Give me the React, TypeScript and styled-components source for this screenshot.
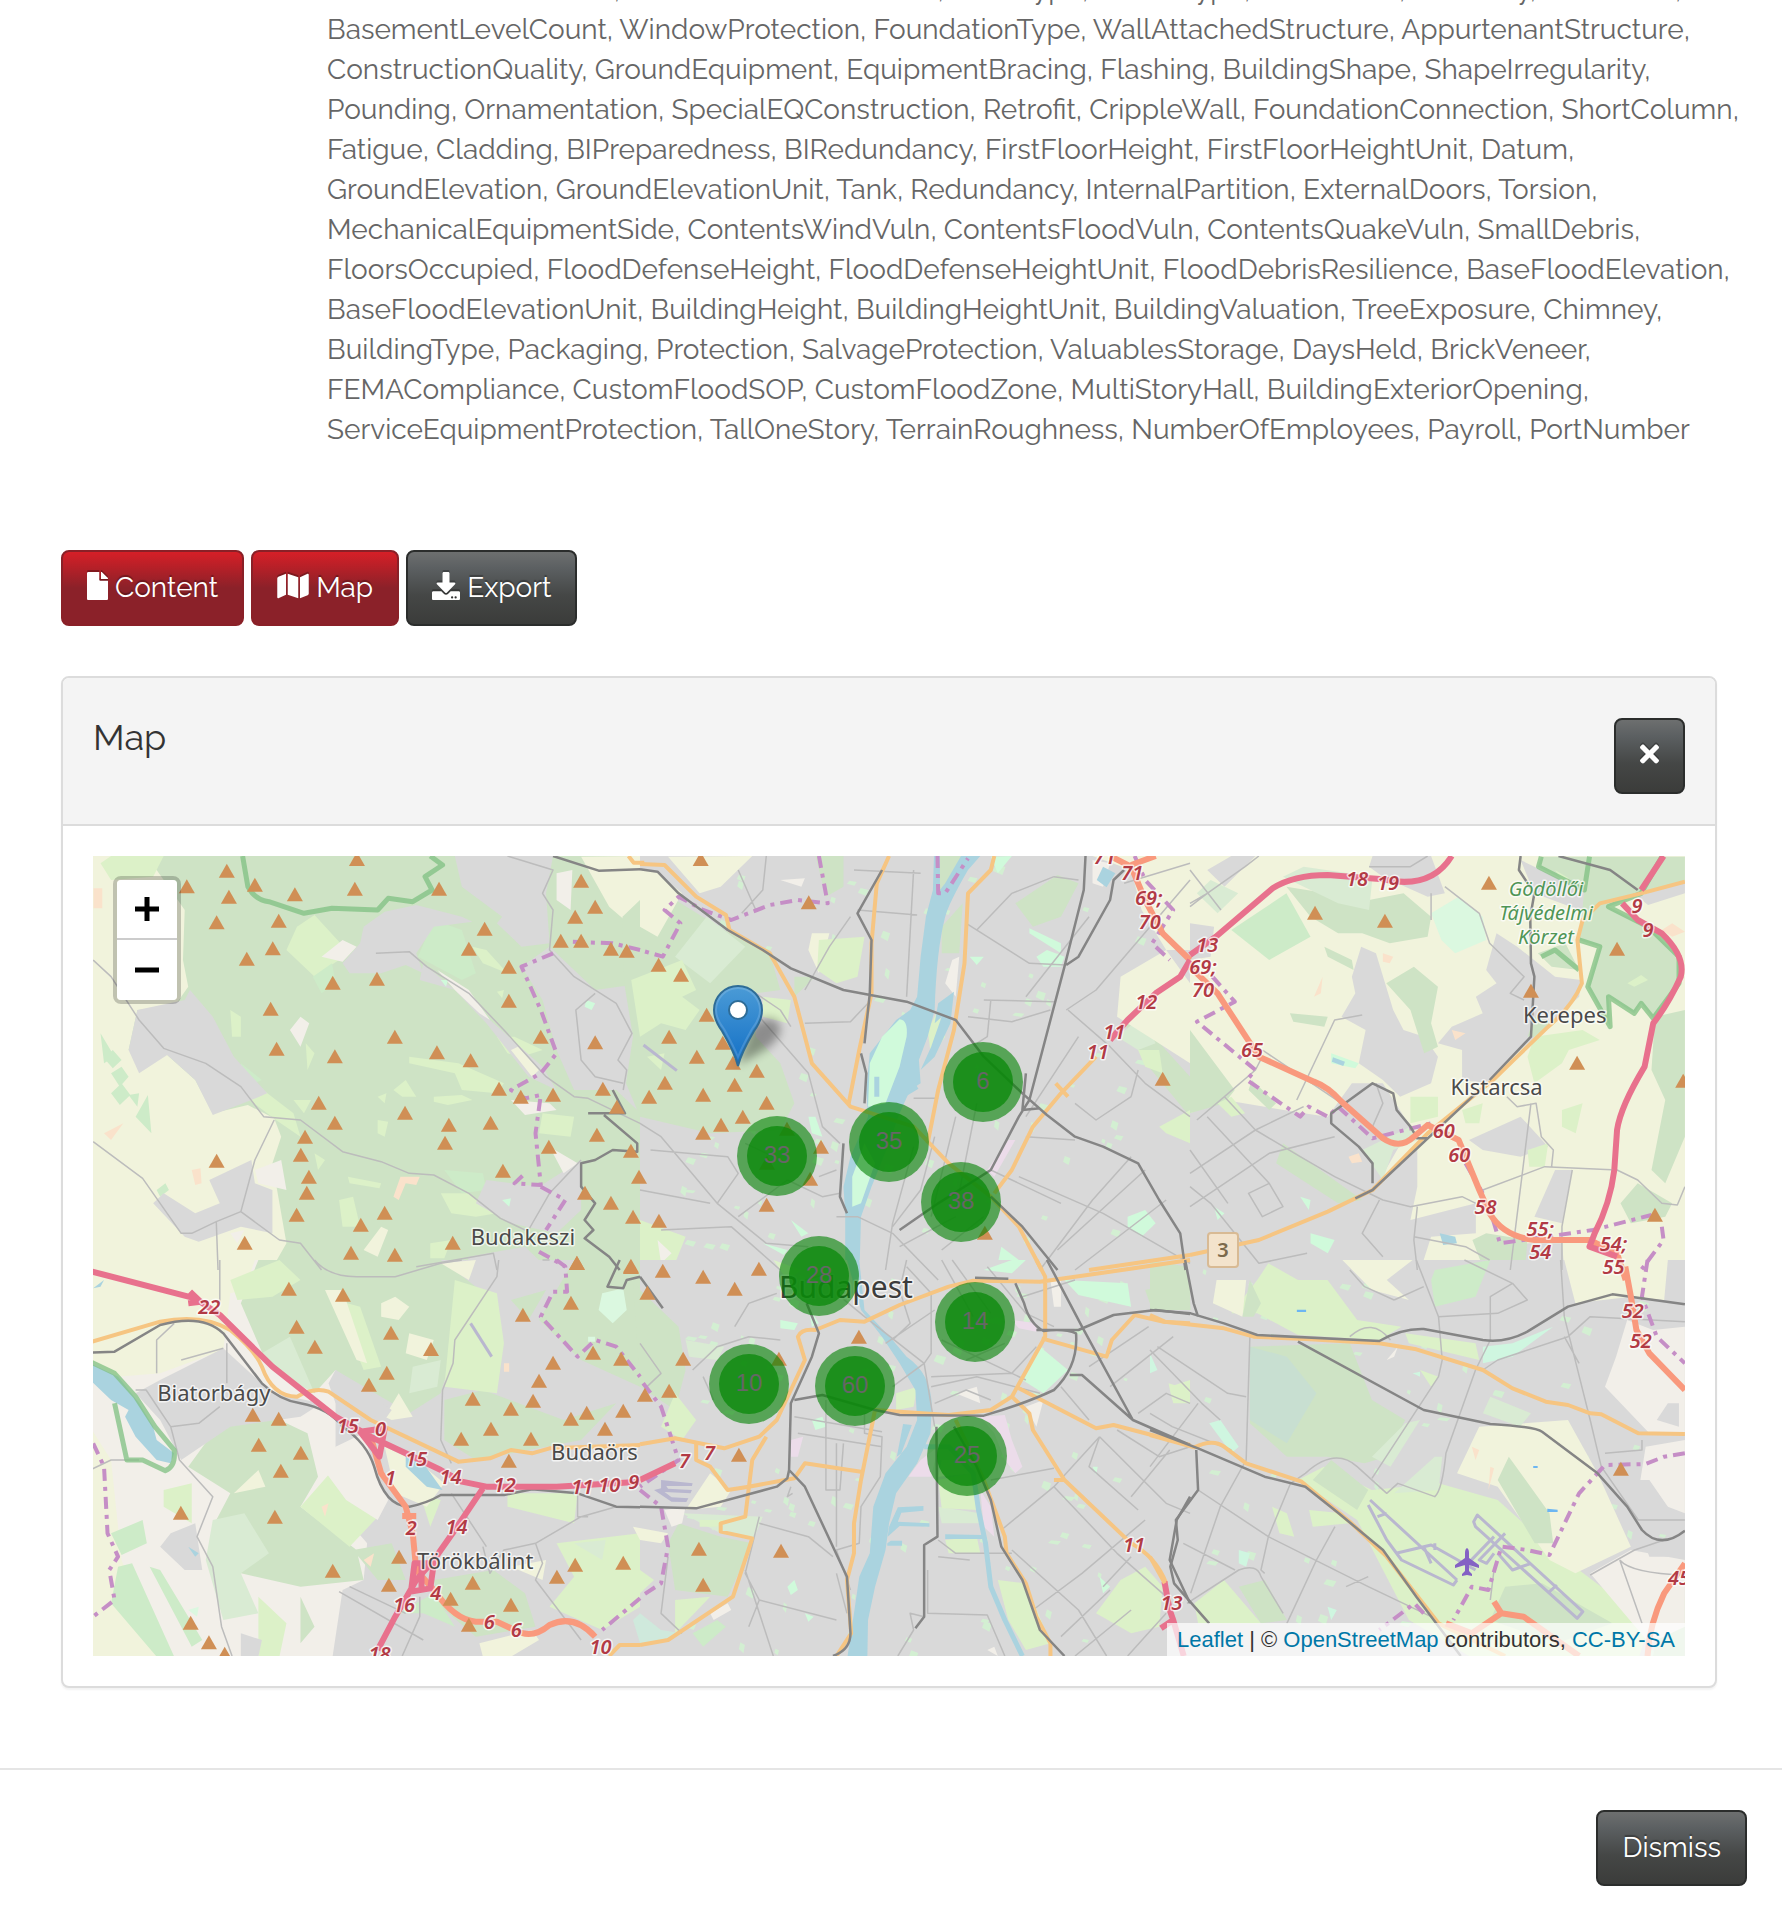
import React from "react";
import styled, { createGlobalStyle, css } from "styled-components";
import { FaDownload, FaFile, FaMap, FaTimes } from "react-icons/fa";

/* ---------- page ---------- */

const GlobalStyle = createGlobalStyle`
  *, *::before, *::after { box-sizing: border-box; }
  body {
    margin: 0;
    background: #fff;
    color: #666;
    font-family: Raleway, Lato, "Open Sans", sans-serif;
    font-size: 28px;
    line-height: 40px;
    overflow: hidden;
  }
`;

const Modal = styled.main`
  display: flex;
  flex-direction: column;
`;

const Details = styled.dl`
  display: grid;
  grid-template-columns: 292px 1fr;
  margin: -30px 0 0;
  padding: 0 32px 0 35px;
`;

const Fields = styled.dd`
  grid-column: 2;
  margin: 0;
  white-space: nowrap;
`;

const Section = styled.section`
  display: flex;
  flex-direction: column;
  gap: 50px;
  padding: 100px 65px 80px 61px;
`;

const Toolbar = styled.div`
  display: flex;
  gap: 7px;
`;

const red = css`
  border-color: #8a2027;
  background: linear-gradient(#d61f27, #8b2129 50%, #8b2129);
`;

const dark = css`
  border-color: #2b2d2c;
  background: linear-gradient(#6d6f6f, #5c6062 22%, #454746 60%, #3b3c3a);
`;

const Button = styled.button<{ $tone?: "red" | "dark"; $icon?: number }>`
  display: inline-flex;
  align-items: center;
  justify-content: center;
  gap: 7px;
  height: 76px;
  padding: 0 24px;
  border: 2px solid;
  border-radius: 8px;
  color: #fff;
  font: inherit;
  text-shadow: 0 -2px 1px rgba(0, 0, 0, 0.3);
  cursor: pointer;
  ${(p) => (p.$tone === "red" ? red : dark)}

  svg {
    flex: none;
    width: ${(p) => p.$icon ?? 28}px;
    height: 28px;
    margin-bottom: 4px;
    filter: drop-shadow(0 -2px 0 rgba(0, 0, 0, 0.25));
  }
`;

const Card = styled.article`
  border: 2px solid #dcdcdc;
  border-radius: 8px;
  background: #fff;
  box-shadow: 0 2px 2px rgba(0, 0, 0, 0.05);
`;

const CardHeader = styled.header`
  display: flex;
  align-items: flex-start;
  justify-content: space-between;
  padding: 40px 30px 30px;
  border-bottom: 2px solid #dcdcdc;
  border-radius: 6px 6px 0 0;
  background: #f4f4f4;
`;

const CardTitle = styled.h3`
  margin: 0;
  color: #333;
  font-size: 36px;
  font-weight: 400;
  line-height: 38px;
`;

const CardBody = styled.div`
  padding: 30px;
`;

const Footer = styled.footer`
  display: flex;
  justify-content: flex-end;
  padding: 40px 35px 32px;
  border-top: 2px solid #e5e5e5;
`;

/* ---------- map widgets ---------- */

const MapFrame = styled.div`
  position: relative;
  height: 800px;
  overflow: hidden;
  background: #d9d9d9;
  font-family: "Liberation Sans", Arial, sans-serif;
`;

const MapCanvas = styled.svg`
  display: block;
  width: 100%;
  height: 100%;

  path { vector-effect: non-scaling-stroke; }
`;

const ZoomControl = styled.div`
  position: absolute;
  top: 20px;
  left: 20px;
  display: flex;
  flex-direction: column;
  border: 4px solid rgba(0, 0, 0, 0.2);
  border-radius: 8px;
  background-clip: padding-box;
`;

const ZoomButton = styled.button`
  display: flex;
  align-items: center;
  justify-content: center;
  width: 60px;
  height: 60px;
  padding: 0;
  border: 0;
  border-radius: 0 0 4px 4px;
  background: #fff;
  color: #000;
  cursor: pointer;

  &:first-child {
    border-bottom: 2px solid #ccc;
    border-radius: 4px 4px 0 0;
  }
`;

const Cluster = styled.button`
  position: absolute;
  display: flex;
  align-items: center;
  justify-content: center;
  width: 80px;
  height: 80px;
  margin: -40px 0 0 -40px;
  padding: 0 0 2px;
  border: 10px solid transparent;
  border-radius: 50%;
  background: rgba(12, 137, 12, 0.78) padding-box;
  color: #666;
  font: 24px/30px "Liberation Sans", Arial, sans-serif;
  cursor: pointer;

  &::before {
    content: "";
    position: absolute;
    inset: -10px;
    z-index: -1;
    border-radius: 50%;
    background: rgba(0, 128, 0, 0.6);
  }
`;

const Markers = styled.div`
  position: absolute;
  inset: 0;
  isolation: isolate;
`;

const Pin = styled.svg`
  position: absolute;
  overflow: visible;
  width: 50px;
  height: 82px;
  margin: -82px 0 0 -25px;
`;

const Attribution = styled.div`
  position: absolute;
  right: 0;
  bottom: 0;
  padding: 0 10px;
  background: rgba(255, 255, 255, 0.7);
  color: #333;
  font-size: 22px;
  line-height: 33px;

  a { color: #0078a8; text-decoration: none; }
`;

/* ---------- map data ---------- */

type Pt = [number, number];
type Label = [string, number, number];

interface Sheet {
  x: number;
  y: number;
  sx: number;
  specks?: number;
  fills: [string, string][];
  minor: string;
  rail: string;
  primary: string;
  trunk?: string;
  motorway?: string;
  border: string;
  peaks: Pt[];
  refs: Label[];
  towns?: Label[];
}

const SY = 1 / 3;
const C = {
  urban: "#d9d9d9",
  farm: "#f1f3dc",
  wood: "#cee3c5",
  grass: "#dcf1c8",
  park: "#cdebc8",
  pale: "#f2efe9",
  pitch: "#d0fadb",
  water: "#aad3df",
  works: "#ecdcea",
  scrub: "#d9ebd3",
  sand: "#fae2cb",
};

const sheets: Sheet[] = [
  {
    x: 90, y: 850, sx: 0.3508,
    fills: [
      [C.wood, "M0 0H1580V1290H0Z"],
      [C.farm, "M0 0L100 18L190 60L270 180L265 330L280 410L240 470L135 480L110 600L220 615L300 690L350 790L450 765L525 805L545 860L520 940L560 1180L500 1290H0Z"],
      [C.grass, "M30 40L60 18H210L180 80L60 90Z M590 230L640 195L740 310L680 350L660 400L560 300Z M455 750L500 725L580 790L600 860L530 810Z M1160 560L1210 560L1290 600L1230 620L1190 610Z M910 620L1050 640L1180 700L1160 730L1060 720L1040 670L910 640Z M980 740L1060 735L1090 750L1020 765L980 755Z M1290 790L1380 800L1370 860L1280 850Z M1000 1030L1080 1030L1160 1090L1100 1100L1030 1090Z M710 1050L750 1040L770 1130L720 1130Z M970 1180L1030 1170L1010 1225L970 1225Z M400 480L430 500L430 560L405 560Z M615 580L640 610L620 660Z M640 910L670 930L650 960Z M735 980L830 1000L825 1015L740 1000Z M820 740L845 730L840 760Z M820 810L850 815L840 860L820 850Z M865 720L900 690L930 740L890 740Z M580 750L630 750L610 790Z M1160 425L1180 420L1175 445Z M1090 290L1130 300L1190 370L1120 340Z"],
      [C.park, "M935 320L980 210L1060 240L1100 370L1060 390Z M635 380L690 340L700 400L660 430Z M30 550L70 620L40 640Z M40 625L65 600L90 630L65 655Z M60 670L90 650L110 680L85 710Z M60 730L90 700L115 735L85 765Z M110 735L140 730L135 770Z M130 800L165 735L175 850Z M430 640L490 690L470 700L430 670Z M1010 960L1120 970L1130 1020L1060 1030Z M190 1020L215 1000L225 1020L200 1040Z"],
      [C.urban, "M285 420L350 500L410 620L505 730L460 750L350 795L300 690L220 615L140 670L110 600L135 480L270 450Z M1040 18H1320L1300 130L1310 280L1230 290L1160 220L1175 200L1060 110Z M780 230L840 185L930 165L1060 200L1090 215L980 230L930 310L950 370L900 345L830 370L740 370L720 340L770 280Z M1230 350L1310 290L1440 420L1580 400V800L1500 720H1380L1330 600L1290 450Z M950 340L1130 500L1290 650L1330 720L1250 680L1130 520L1040 420L940 390Z M460 930L340 990L370 1060L300 1090L210 1030L180 1060L270 1160L310 1175L430 1130L520 1150L520 1020L470 1000Z M1130 990L1280 1010L1400 930L1400 1080L1330 1150L1200 1120L1100 1060Z M1080 1220L1240 1190L1340 1290H1060Z"],
      [C.pale, "M660 320L720 270L760 290L720 335Z M570 540L600 500L625 520L600 590Z M1330 70L1375 60L1370 180L1330 150Z M470 960L545 930L560 1020L480 1000Z M1200 750L1310 760L1330 780L1240 795Z M1310 890L1390 940L1350 970Z M990 360L1080 420L1140 510L1110 490L1040 420Z M400 1150L440 1140L420 1180Z"],
      [C.farm, "M1400 20L1568 18V250L1480 170Z M1200 600L1220 590L1280 660L1260 680Z M780 1200L830 1130L850 1140L820 1220Z"],
      [C.sand, "M865 1040L885 980L940 980L930 1005L900 1000L880 1050Z M290 960L315 955L318 1000L300 1005Z M10 115H35V175H10Z M40 850L95 820L60 870Z"],
      [C.pitch, "M1415 450L1440 460L1430 480L1410 470Z M1000 390L1020 390L1015 410Z M1175 1050L1200 1045L1195 1070Z"],
    ],
    minor: "M9 330L60 380L140 510L210 595L330 640L430 710L495 800L600 810L720 905L830 935L910 970L980 975L1080 1030L1170 1105L1240 1140 M9 875L150 985L260 1150L290 1150L360 1115L430 1085L540 1170L600 1180L660 1260 M525 810L470 930L430 1085 M360 1115L365 1260 M815 310L910 305L960 350L1080 430L1180 540L1300 680L1380 740L1420 745L1568 820 M1190 18L1320 60L1290 130L1320 180L1310 300L1380 380L1500 460L1545 550L1505 630L1530 660L1520 720 M1400 930L1310 1030L1250 1140 M930 1250L1150 1210L1160 1260 M1440 430L1385 480L1400 630L1440 680L1520 700",
    rail: "M1320 18L1450 62L1568 58 M1490 720L1525 790L1420 790 M1465 795L1560 880L1560 905L1490 900L1440 930L1400 940L1400 1010L1440 1060L1410 1110L1435 1140L1410 1165L1480 1220L1510 1260",
    primary: "M1535 18L1550 38L1580 38",
    border: "M1568 300L1490 280L1370 275 M1320 310L1230 350L1285 480L1330 610L1285 670L1200 720L1240 745L1285 735L1270 850L1285 1005L1210 1000L1240 970 M1285 1010L1355 1050L1300 1140 M1280 1205L1355 1250",
    peaks: [[390,65],[276,112],[396,143],[470,107],[761,30],[584,136],[755,119],[995,119],[361,220],[538,215],[521,298],[447,329],[692,401],[818,389],[515,479],[1125,239],[1080,299],[1194,353],[1194,455],[1400,95],[1440,173],[1383,203],[1342,275],[1400,275],[1485,299],[1530,305],[869,563],[532,599],[698,622],[989,610],[1085,634],[1285,563],[1440,580],[1166,719],[1228,743],[1320,737],[1462,719],[1502,773],[652,761],[698,821],[898,791],[1023,827],[1142,821],[1012,881],[613,863],[601,917],[624,983],[618,1031],[361,935],[589,1097],[840,1091],[772,1127],[744,1211],[869,1217],[1034,1181],[441,1181],[1308,893],[1177,965],[1445,857],[1542,905],[1411,1031],[1485,1061],[1548,1103],[1388,1241],[1542,1250],[1565,983]],
    refs: [],
    towns: [["Budakeszi", 1234, 1165]],
  },
  {
    x: 640, y: 850, sx: 0.3508, specks: 90,
    fills: [
      [C.urban, "M0 0H1590V1290H0Z"],
      [C.wood, "M-50 200L0 150L70 130L240 240L370 310L400 420L330 430L330 560L400 640L440 760L400 840L200 850L0 800L-40 700L-20 560L-45 400Z M440 380H500L440 440Z M1190 75L1250 100L1200 200L1120 230L1070 160Z M860 230L920 160L910 310L860 310Z M1380 520L1430 520L1568 680V800L1450 650Z M500 18H580V110L530 140Z"],
      [C.scrub, "M100 320L190 200L300 290L200 400Z M1360 560L1430 500L1470 580L1420 600Z"],
      [C.farm, "M0 60H40L120 130L50 260L0 230Z M80 20L320 18L230 110L170 130Z M1290 18H1568V300L1500 300L1430 180L1400 60Z M1370 380L1500 300L1568 400V640L1450 560L1360 500Z M490 250L540 250L510 370L480 300Z"],
      [C.grass, "M-25 390L120 330L160 420L120 440L170 480L130 540L60 520L0 560Z M510 270L640 260L620 380L560 400L505 360Z M350 440L430 450L420 520L350 500Z M1480 830L1568 780V880L1500 850Z M0 1110L130 1160L100 1240L30 1290H0Z M1420 600L1480 600L1490 670L1440 650Z M820 540L850 480L870 560L830 620Z M20 620L70 610L60 660Z"],
      [C.pitch, "M1130 320L1160 300L1210 320L1200 350L1150 350Z M1110 235L1200 280L1200 310L1110 250Z M940 320L980 320L960 345Z M480 800L500 800L520 860L490 850Z M1390 1100L1440 1080L1470 1120L1430 1160L1390 1130Z M1030 1190L1080 1230L1020 1240Z M430 1110L480 1150L460 1160Z M1000 20L1060 18L1020 70Z M350 1180L420 1200L410 1215Z"],
      [C.works, "M1050 870L1070 870L1010 980L990 960Z"],
      [C.pale, "M50 1170L90 1210L60 1240Z M400 90L470 85L460 110Z M890 330L910 320L900 440L870 400Z M1290 30L1340 40L1320 110L1290 100Z"],
      [C.water, "M838 18H970L935 60Q880 160 870 200Q845 300 840 480L820 560L795 630L800 700L770 720L740 790L710 880L660 1010L630 1100L625 1290H585V1090L580 1010L600 920L650 800L645 720L655 610L730 510L770 480L790 440L800 320L815 200L835 120Z M895 425L885 520L840 620L800 660L830 590L860 500L840 520L850 460Z M1320 50L1355 70L1330 112L1302 90Z"],
      [C.pitch, "M740 508Q765 510 760 560L740 650L700 760L650 770L655 640L690 560Z M640 880L670 940L630 1060L605 1070V980Z"],
      [C.wood, "M855 18H915L870 100L855 120Z"],
    ],
    minor: "M360 18L350 120L290 190 M280 60L330 180 M470 420L540 290L600 200 M610 60L800 70 M620 180L790 195 M780 60L760 440 M470 520L600 515L650 460 M330 430L400 480L430 530 M340 500L480 670L520 830L570 880 M930 220L1110 340L1215 345 M980 450L1180 455 M935 500L1060 515L1170 480 M1000 450L990 560L960 580 M1180 80L1060 130L960 240 M1180 80L1250 90 M1380 100L1568 40 M1220 480L1340 590L1440 700L1568 800 M1100 440L1280 200 M1215 480L1300 420L1568 90 M1400 740L1420 660 M1240 760L1300 810L1400 740 M1100 860L1240 870 M1080 980L1320 1090L1568 1240 M1000 960L1200 1060 M1140 1260L1290 1050L1400 920 M1190 1200L1440 960 M1240 1260L1500 1050 M860 1200L980 1100 M700 1260L720 1120L780 890 M840 860L800 1020L720 1130 M560 1100L620 1100L720 1150L850 1290 M740 1190L900 1100 M900 800L830 1100 M0 820L60 860L220 1060 M30 900L250 920L280 970L220 1060L360 1180L480 1190 M0 1020L200 1060 M60 1140L260 1130L400 1260 M280 1100L420 990 M420 990L520 1040L570 1030 M300 880L380 920 M510 980L560 960 M780 745L850 745 M960 760L900 1080 M1250 560L1100 800",
    rail: "M0 58L50 65L110 130L250 240L350 300L430 355L580 420L760 455L900 510L980 620L1090 730L1160 795L1240 860L1320 890L1420 940L1480 1050L1540 1150L1555 1260 M1270 18L1265 120L1210 350L1110 750L1080 800L1000 960L850 1060L740 1140 M1380 60L1350 90L1340 150L1250 320L1215 345 M690 60L620 190L660 270L655 430L640 580 M630 610L645 670L640 760 M580 880L570 1040L590 1090 M1000 1040L1090 1130L1190 1260 M1100 670L1090 780L1140 775",
    primary: "M0 42L70 45L160 140L245 195L255 240L370 310L440 440L490 640L600 770L780 830L880 940L1000 1040L1080 1130L1145 1260 M710 18L675 100L660 280L660 430L625 600L595 760 M1010 18L1000 60L935 130L925 340L895 540L850 720L820 880 M1300 620L1200 730L1120 830L1060 960L1010 1030 M1185 700L1220 740 M1568 1215L1280 1260",
    trunk: "M1340 18L1400 50L1440 150L1490 250L1568 330 M1400 45L1470 18",
    motorway: "M1568 330L1540 380L1470 430L1390 510L1340 570",
    border: "M510 18L535 160L450 150L370 165L260 210L180 180L110 140L70 180L115 220L65 320L0 300 M848 18L850 130L870 130L935 25 M1410 18L1440 90L1520 180L1460 280L1510 330",
    peaks: [[173,30],[481,160],[53,347],[117,377],[190,497],[83,563],[236,581],[162,623],[265,641],[333,665],[71,701],[26,743],[180,737],[270,707],[361,761],[293,803],[231,827],[180,851],[419,839],[516,893],[362,941],[485,989],[361,1067],[54,1115],[1490,689],[983,1151]],
    refs: [["71",1325,22],["71",1403,70],["69;",1450,143],["70",1453,215],["12",1443,455],["11",1352,545],["11",1305,607]],
  },
  {
    x: 1190, y: 850, sx: 0.3444,
    fills: [
      [C.farm, "M0 0H1460V1290H0Z"],
      [C.urban, "M50 60L120 18L190 18L100 110Z M0 220L70 230L60 320L0 330Z M530 18H700L740 130L690 140L560 80L520 50Z M497 290L540 310L590 480L620 540L680 560L720 620L700 700L610 740L560 690L490 640L510 540L440 500L480 430L470 380Z M890 250L950 290L1060 380L1135 390L1130 440L960 600L860 700L790 690L790 600L720 580L760 530L850 490L830 440L890 400L860 360Z M0 790L100 750L330 790L400 800L470 700L560 700L640 830L540 1010L660 900V1010L640 1110L830 1060V1150L700 1160L660 1290H0Z M810 870L960 800L1040 890L960 920L850 900Z M1300 140L1437 90V130L1330 165Z M1060 960H1110L1080 1120L1000 1100Z M960 30L1080 90L1150 110L1200 160L1130 180L1000 130Z M1390 1240H1437V1290H1390Z M980 1180L1080 1180L1090 1290H900Z"],
      [C.wood, "M280 110L520 150L620 130L700 200L690 260L580 280L500 250L430 250L350 200Z M570 400L650 350L720 410L700 520L720 590L680 610L640 480Z M1350 500L1437 480V860L1380 1000L1340 960L1380 750L1340 660Z M1250 1060L1300 1000L1400 1060L1380 1100L1280 1120Z M0 540L130 720L100 760L0 790Z M270 880L500 1050L430 1060L250 940Z M820 1170L860 1150L980 1170L970 1290H700L850 1250Z M390 290L470 330L475 360L400 320Z M290 490L400 500L390 530L300 515Z M980 560L1000 500L1060 520L1010 560Z M180 690L250 760L230 780L170 720Z M1010 310L1090 280L1130 360L1050 350Z"],
      [C.scrub, "M330 50L530 80L520 180L430 160L270 80Z M20 130L60 90L140 130L80 190Z M500 900L560 990L590 900L660 870L640 830Z"],
      [C.park, "M280 130L350 260L230 330L120 240Z"],
      [C.grass, "M1000 560L1140 540L1190 570L1100 600L1080 640L1000 700L980 620Z M640 740L720 740L720 800L640 820Z M790 780L850 760L840 820L800 820Z M980 900L1040 880L1030 950L985 950Z M1080 780L1140 760L1120 850L1080 830Z M80 760L120 740L160 790L120 800Z"],
      ["#dbf8e0", "M700 190L780 140L850 200L860 270L770 310L730 270Z"],
      [C.pitch, "M350 1150L420 1170L400 1210L350 1180Z M320 1040L350 1050L345 1080Z M70 1070L100 1090L80 1110Z M410 610L490 640L480 655L410 640Z"],
      [C.water, "M415 622L450 635L445 648L412 635Z M725 1150L770 1160L775 1180L735 1185Z"],
      [C.sand, "M560 310L590 320L580 340L560 335Z M760 540L800 550L770 570Z M360 440L385 380L380 430Z M1370 240L1400 220L1437 245L1400 260Z M460 920L490 910L500 935L470 940Z"],
      [C.wood, "M1020 20H1437V95L1310 130L1215 170L1330 230L1420 320V400L1345 505L1310 460L1290 490L1215 440L1220 530L1155 410L1190 290L1130 270L1145 120L1010 50Z"],
      [C.grass, "M1270 400L1310 375L1330 390L1290 410Z M1060 60L1080 90L1100 85Z"],
    ],
    minor: "M0 170L50 130L160 50L200 18 M0 60L90 180 M50 130L0 160 M520 50L640 50L690 18 M700 130V210 M740 110L840 190L870 280L970 380L930 430L970 450 M310 750L420 510L500 495 M210 620L190 660L100 740L20 810 M100 740L190 840L320 920L420 980L560 1050L640 1070L790 1040L830 1060 M850 1020L1030 950L1240 960L1300 990L1370 1060L1415 1065L1437 1010 M1110 960L1080 1130V1260 M920 740L950 770L1005 760L1020 860L1055 900L1050 950 M660 1070L650 1170L660 1260 M0 970L190 840 M0 1070L230 910L420 860 M190 840L330 770 M50 800L230 1000L270 1070L210 1100L170 1030L230 1000 M0 1010L60 1060L200 1240L340 1210 M550 1050L500 1150L560 1220 M440 760L210 600 M0 900L110 1060 M650 1160L800 1190L870 1230 M540 700L560 760L530 830 M990 760L930 1260",
    rail: "M960 18L955 60L1000 130L988 200L990 340L1000 380L990 560L870 690 M1070 18L1220 60L1300 120 M830 730L530 1020L480 1045 M530 1000L530 940L490 890L410 820V790L530 700L590 730L600 780L640 830L660 865H690",
    primary: "M1437 95L1310 130L1190 160L1140 210L1125 270L1138 400Q1110 470 1040 530L950 620L880 690L690 850L530 1020L400 1085L200 1170L0 1215",
    trunk: "M0 350L20 370L80 430L200 620L360 695Q400 710 440 755L560 865Q610 900 650 860L690 825L780 870L840 1020L870 1090Q910 1160 1000 1170H1160L1240 1210L1265 1290",
    motorway: "M0 315L75 260L240 115Q300 75 400 75L560 88Q700 120 760 18 M1375 18L1310 120 M1255 160L1300 210L1370 250Q1440 320 1425 380Q1390 460 1345 520L1320 650Q1250 770 1240 840L1232 960Q1220 1060 1175 1150L1160 1190L1240 1220",
    border: "M65 380L130 455L20 515L190 660L165 690L320 800L345 770L400 800L430 770L530 865L700 820 M800 940L850 1030 M880 1110L900 1180L1170 1140L1340 1095 M1370 1130L1375 1170L1310 1260",
    peaks: [[363,191],[566,215],[868,101],[1240,299],[990,425],[1124,641],[1350,1097],[1432,695]],
    refs: [["18",485,88],["19",575,98],["9",1298,168],["9",1330,240],["13",50,285],["69;",38,350],["70",38,419],["65",180,600],["60",737,842],["60",782,915],["58",858,1072],["55;",1017,1137],["54",1017,1207],["54;",1230,1182],["55",1230,1252]],
    towns: [["Kerepes", 1088, 497], ["Kistarcsa", 890, 714]],
  },
  {
    x: 90, y: 1260, sx: 0.3508,
    fills: [
      [C.pale, "M0 0H900V1200H0Z"],
      [C.urban, "M700 0H1580V1200H690L720 990L780 960L790 850L700 740Z"],
      [C.farm, "M0 0H470L440 90L400 100L380 270L200 340L80 350L0 300Z M0 500L60 600L90 900L200 1200H0Z"],
      [C.wood, "M480 0H1000L1100 80L1040 250L1000 400L910 460L700 330L640 400L500 300L430 130Z M370 490L500 460L620 520L650 650L600 740L760 870L780 960L600 980L430 940L350 800L400 700L280 620Z M1280 180L1380 0H1568V380L1400 300Z M980 960L1150 930L1240 1000L1270 1100L1100 1130L1000 1040Z M1010 420L1120 390L1350 480L1500 430L1400 540L1100 600L1010 540Z M600 1010L640 1100L600 1150Z M750 870L860 850L900 960L820 960Z M1200 120L1300 90L1250 180Z"],
      [C.grass, "M400 60L540 0L600 60L520 110L420 120Z M600 740L700 620L830 760L740 860Z M1190 700H1390L1380 790L1190 740Z M1330 850L1568 820V1040L1460 1110L1310 1040L1380 950Z M1040 60L1160 100L1180 250L1160 400L1010 380Z M210 690L290 670V790L210 740Z M940 700L1000 720L970 800Z M480 1010L560 1090L540 1190H480Z M700 120L770 140L830 320L780 330Z"],
      [C.scrub, "M490 280L570 230L640 400L520 330Z M350 780L440 760L510 880L430 940L480 1060L380 1080L330 900Z M920 320L1000 300L990 380L910 400Z M1380 850L1470 840L1460 900Z"],
      [C.park, "M60 820L150 780L162 850L90 885Z M80 920L120 910L240 1190H190L60 1030Z M170 920L200 930L320 1140L290 1160Z M880 1060L980 1000L1040 1100L950 1060Z"],
      [C.farm, "M1000 10L1100 0L1080 60Z M830 130L870 110L910 140L880 180L830 170Z M670 90L720 90L790 310L760 300Z M840 470L880 400L920 470L860 480Z M840 560L940 610L1010 670L960 740L870 700Z M1200 920L1300 900L1290 960Z M1110 1150L1260 1110L1280 1140L1200 1190H1120Z M910 220L980 240L960 300L900 280Z M480 630L500 680L410 700Z"],
      [C.urban, "M200 360L380 265L520 400L660 430L600 470L400 500L260 600L200 480L130 400Z M680 370L700 330L860 450L840 480L700 430Z M200 860L230 820L300 790L320 930L270 930Z M430 1120L490 1140L480 1190H430Z"],
      [C.pale, "M700 560L780 520L810 620L850 720L820 780L730 720L660 620Z"],
      [C.sand, "M660 740L680 730L670 770Z M1180 310L1195 310L1195 335H1180Z M780 900L810 880L800 920Z"],
      ["#dbf8e0", "M1460 100L1520 85L1530 150L1490 190L1450 150Z M1420 230H1440V245H1420Z M280 1050L310 1040L305 1070Z"],
      [C.water, "M0 310L80 350L140 430L180 500L190 540L240 580L230 610L190 600L130 530L100 470L110 450L60 420L0 360Z M900 590L950 610L1005 690L960 680L900 620Z M280 860L310 880L300 890Z M9 85L40 60L30 80Z"],
    ],
    minor: "M370 0V130 M640 0Q680 50 760 50H870L1000 10L1060 0 M1165 0L1160 50L1040 240L1035 310L1005 390L1000 540L1030 610 M130 390H160L230 500L255 600L350 710L305 830L350 920L375 1100L405 1188 M230 500L310 490L370 440 M0 630L60 600L140 600 M1270 850L1400 770L1500 740 M1270 850L1290 910L1270 960L1400 1140 M710 995L950 1140 M740 980L900 1060 M1290 0L1310 0 M390 250V370 M260 300L380 265 M190 340V240L240 190 M1120 860L1140 940L1180 870L1270 850 M940 1010V1070L890 1188 M1390 700V770H1420 M1030 700L1130 860",
    rail: "M0 278L70 275L200 195Q320 160 380 220L490 370Q540 420 600 430Q680 445 720 500Q790 550 810 620Q840 740 910 740Q960 730 1000 705H1180L1260 688L1390 700L1500 740L1568 742 M1510 0L1475 80L1520 85L1530 60L1568 50",
    primary: "M0 247L200 185Q320 160 400 210Q470 270 490 320Q520 410 590 410Q640 380 680 395L800 480L880 520L1050 605L1140 595L1200 570L1260 580L1310 565L1568 555 M1480 1188L1510 1155H1568",
    trunk: "M800 530L830 640L900 740L920 820L930 930L980 990Q1040 1080 1100 1085H1160L1210 1110Q1260 1140 1310 1095Q1380 1060 1440 1130 M890 768L930 768",
    motorway: "M0 33L300 115L370 165L520 320L700 470L800 530L900 580L1000 630L1060 665L1130 680H1330L1568 665 M285 95L315 125L280 130 M1120 685L1040 810L980 900L930 960L870 1070L820 1170 M770 515L840 505L825 590ZL815 540 M925 910L980 910L970 985L915 995Z M945 910V990",
    border: "M9 550L40 620L50 820L80 890L55 930L70 1020L9 1070 M1330 0L1355 20L1360 95L1320 95L1285 170L1390 290L1440 240L1500 260L1568 350 M1568 1015L1460 1110",
    peaks: [[567,89],[721,107],[589,203],[641,263],[858,221],[972,270],[846,341],[795,377],[1234,167],[1371,131],[1388,12],[1542,24],[1434,281],[1514,299],[1320,311],[1280,365],[1263,425],[1200,449],[1091,419],[1143,509],[1058,539],[1257,539],[1371,479],[1416,461],[1520,455],[1468,509],[464,467],[538,479],[481,557],[601,581],[544,635],[259,761],[527,773],[1194,605],[881,893],[692,935],[852,977],[1091,971],[1028,1019],[1080,1097],[1200,1037],[1331,953],[1383,917],[1520,911],[287,1091],[339,1150],[384,1184]],
    refs: [["22",340,142],["15",735,497],["0",828,508],["15",930,598],["14",1028,650],["1",857,653],["12",1182,675],["11",1403,680],["10",1480,675],["9",1550,665],["14",1045,800],["2",916,803],["16",895,1035],["4",986,1000],["6",1138,1087],["6",1215,1110],["10",1455,1162],["18",825,1182]],
    towns: [["Biatorbágy", 353, 402], ["Budaörs", 1438, 580], ["Törökbálint", 1098, 905]],
  },
  {
    x: 640, y: 1260, sx: 0.3508, specks: 110,
    fills: [
      [C.urban, "M0 0H1580V1200H0Z"],
      [C.wood, "M-20 60L0 90L60 150L110 200L130 330L100 450L0 380Z M110 790L230 830L320 850L250 1010L100 990L80 850Z M1440 90L1568 60V150L1460 150Z"],
      [C.scrub, "M130 240L240 260L220 300L140 290Z M120 760L350 770L300 900L320 840L230 820Z M850 740L970 760V790L860 790Z"],
      [C.farm, "M130 750L200 640L260 690L230 740Z M860 600L940 600L950 640L850 650Z M-20 800L80 820L60 850L0 840Z"],
      [C.grass, "M100 400L160 480L120 540L60 500Z M850 660L940 640L960 700L965 750L860 745Z M1370 960L1440 920L1490 980L1480 1100L1400 1120L1300 1060Z M1020 960L1100 970L1170 1150L1100 1170L1050 1080Z M1510 380L1568 360V430L1520 430Z M380 0L460 30L420 60Z M0 930L40 960L0 1000Z M170 780H240L220 800H170Z M730 400L790 380L780 440L730 450Z M100 1020L200 1010L100 1120Z M870 840L960 830L970 880H880Z"],
      [C.pitch, "M1140 260L1220 330L1150 400L1090 360Z M1210 60L1390 70L1400 140L1250 105Z M490 480L520 470L530 500L500 510Z M420 980L440 960L450 990L430 1005Z M480 140L510 190L490 200Z M1310 950L1340 980L1320 1000Z M980 30L1060 0H1100L1060 40Z M400 180L450 190L440 210L400 205Z M470 1060L495 1070L480 1085Z M1290 620L1305 620L1300 645Z"],
      [C.park, "M150 1120L220 1080L245 1100L180 1160Z"],
      ["#cfe9dc", "M-20 1080L0 1060L60 1110L120 1120L60 1150L0 1150Z"],
      [C.works, "M970 470L1040 465L1060 540L1090 620L1070 640L1040 600L1010 520Z M800 600L850 560L830 650H765Z M430 540L465 530L450 590H430Z M970 690L1000 740L1010 830L980 800Z M1060 180L1130 190L1130 215L1080 205Z"],
      [C.pale, "M70 750L130 740L120 790L90 800Z M200 1060L250 1030L260 1050L210 1080Z M900 400L960 380L970 430Z M1100 440L1150 420L1130 500Z M1170 60L1200 60V140H1180Z M990 1170L1010 1160L1020 1188Z"],
      [C.water, "M590 0H625L640 150L720 240L760 290Q830 340 832 440L828 520L790 610L730 700L710 790L700 870L670 980L650 1080L648 1200H590L610 1060L625 950L655 880L665 740L700 640L760 560L790 480L785 390L740 310L690 230L630 150Z M750 492L775 495L745 580L732 590Z M735 742L808 738V752L745 758L735 785L825 790V800L740 798L706 830L710 800Z M705 850L715 842H747V857H705Z M870 823L975 825V837H870Z"],
      ["#b9b7cf", "M60 660L150 670L148 678H75L80 686L148 690L144 700L70 696L90 712L138 715L132 726L90 725L40 690L60 685Z"],
    ],
    minor: "M0 250L60 340L20 380 M150 330L220 260L310 230L400 240 M180 350L210 420 M440 470L690 515 M450 520L690 560 M530 420L530 690H570L580 550 M640 460V520L690 530L685 650L630 740L625 850L560 870L600 990 M560 550L560 860 M470 60L540 40 M270 200L310 130L390 100 M760 0L740 90L770 190L720 240 M560 100L640 170L810 310L840 500 M700 250L840 150 M720 380L810 310L830 280V100L760 20 M830 350L1060 340L1130 260 M830 380L960 350L1140 400 M860 240L1100 360 M840 430L930 390L1000 420 M860 0L950 170 M890 0L1000 160 M990 20L1100 160L1180 200 M1090 110L1240 60 M930 300L1040 250 M340 790L480 830L550 890 M340 770L300 940L340 1020L560 1080 M80 890L60 1060L120 1120 M300 930L380 1188 M340 1020L310 1100 M560 940L590 1060 M850 840L900 880L1060 880 M850 890L940 900 M735 1188L780 1110L770 1060L810 1070 M820 930V1060L990 1065L1040 1188 M1030 810L1180 680L1310 530 M1000 660L1180 625 M1180 680L1360 880L1500 1010 M1060 870L1250 1050L1330 1188 M1120 1050L1260 940L1440 780 M1200 1130L1340 990 M1310 530L1500 730L1568 760 M1360 510L1480 590L1568 560 M1310 530L1280 620L1420 750 M1400 710L1510 570 M1280 320L1450 200 M1340 380L1520 230 M1420 460L1500 400L1568 430 M1390 1188L1500 1060 M1240 1188L1400 1050 M1400 890L1320 980 M430 680L420 710L435 700 M1200 380L1280 480",
    rail: "M475 130L510 220L490 290L430 430L425 630L470 680L590 950L600 1120Q600 1170 550 1188 M440 420L520 405L670 450L740 465L980 467Q1100 430 1180 390Q1250 320 1243 220Q1210 205 1150 213Q1110 190 1095 130L1070 70 M1160 0L1260 200L1405 480 M1225 345H1260L1405 480L1568 555 M1130 210H1250L1350 165L1470 150L1568 162 M955 53L1050 56 M0 740L160 745L390 680L420 655L425 630 M895 500L960 620L1000 720L1030 860L1090 960L1140 1110L1210 1188 M845 500L848 830L810 855V1070L785 1105 M1568 710L1530 780L1510 900L1568 1030 M0 50L65 145",
    primary: "M0 553L100 535L240 565L340 530L390 480L470 300L450 230Q460 205 500 210L570 180L640 185L740 135L880 80L950 62L1140 65L1310 40L1568 0 M1130 0L1155 50V230L1060 410L1000 450L880 465L740 455L670 450L630 660L610 790V880L590 960L602 1120L560 1188 M630 635L470 610L440 655L310 680L250 690L200 620L160 600V545 M360 530L320 600L300 770L230 790V815L320 835L265 1010L80 1140L0 1155 M1145 235L1330 290L1345 240L1410 165L1490 185L1568 190 M1060 410L1110 460L1120 510L1210 660L1400 850Q1470 890 1500 970 M1180 660H1210 M1080 385L1300 505L1350 495L1568 555 M900 480L980 660L1040 830L1045 880L1100 970L1130 1070L1170 1150V1188",
    motorway: "M0 660L100 610 M1495 965L1510 1050L1520 1080L1485 1105 M1520 1080L1550 1188",
    border: "M9 370L60 440L110 600L0 680 M0 690L60 740L80 860L60 970L9 1005",
    peaks: [[65,35],[180,53],[339,29],[270,89],[21,101],[624,233],[123,299],[396,299],[14,407],[83,395],[282,587],[168,869],[402,875],[180,977]],
    refs: [["7",127,603],["7",198,580],["11",1408,855],["13",1515,1030]],
  },
  {
    x: 1150, y: 1260, sx: 0.3699, specks: 70,
    fills: [
      [C.urban, "M110 0H1460V1200H110Z"],
      [C.grass, "M290 60L320 10L400 60L480 60L560 180L680 200L620 240L400 225L290 160L220 160Z M400 660L470 620L600 690L780 670L940 720L1100 880L1350 1090L1320 1200H880L700 1080L560 780Z M370 320L480 340V360L370 350Z M580 440L650 500L630 530L580 480Z M690 220L880 250L890 300L700 250Z M50 370L110 390L100 420L60 420Z M430 750L520 760L540 790L440 800Z M330 740L370 760L390 830L350 820Z M730 330L780 350L760 380Z M120 1030L200 960L300 1090L130 1090Z"],
      [C.farm, "M180 60L260 60L250 170L170 130Z M520 0H710L640 60L700 120L600 90Z M890 500L1130 480L1170 560L1210 640L1300 860L1150 940L1080 900L940 680L830 640Z M1120 0H1400L1390 120L1300 110L1150 130Z"],
      [C.wood, "M270 260L540 250L600 420L690 480L640 590L580 610L480 590H370L270 490Z M440 660L490 600L590 690L560 750Z M970 590L1080 760L1090 850L1040 850L940 660Z M920 1080L960 980L1060 970L1250 1090L1100 1150Z M0 0L100 20L110 150L0 150Z M240 980L310 960L370 1080L300 1090Z M250 170L270 60L300 130L280 170Z M1380 1080L1446 1010V1188H1360Z"],
      [C.scrub, "M920 410L1030 460L1000 500L900 460Z M690 490L730 480L650 620L600 590Z M770 590H790L780 690L660 700Z"],
      [C.park, "M770 30L920 0L880 110L770 140L760 60Z M1320 420L1380 410L1390 460L1340 480Z"],
      ["#c8dfd1", "M270 260L370 290L450 400L370 550L270 480Z"],
      ["#cff6e0", "M900 260L980 250L1090 200L980 290L900 310Z M160 490L190 480L240 560L220 580Z M240 870L270 880L260 920L240 910Z M0 280L20 330L0 340Z M710 340L730 335V350Z M480 1040L505 1050L490 1080Z"],
      [C.pale, "M1290 180L1360 210L1446 200V520H1350L1230 380L1260 290Z M1340 560L1446 540V760L1400 740L1320 700Z M1190 940L1300 870L1446 900V1100L1350 1150Z M640 300L670 260L660 290Z"],
      [C.urban, "M1400 430H1430V500L1370 480Z M1340 860L1400 850V890H1350Z M1260 660L1350 660L1400 740L1400 780H1310Z"],
      ["#6db6f2", "M397 149H422V156H397Z M1074 746L1102 749V756H1074Z M1036 618H1048V624H1036Z"],
      [C.sand, "M870 560L890 570L880 600Z M920 620L930 625L915 690Z"],
    ],
    minor: "M270 230L260 600L190 740L110 1000 M0 270L140 430L190 480 M20 260L210 400L260 410 M0 620L130 430 M0 460L60 500L220 570 M130 690L320 830L590 980L760 1070 M310 940L300 930L320 830L380 670L420 640Q500 560 560 620L640 700L670 670L770 710Q790 690 800 580L880 330L920 240V110L980 70 M600 655L780 350L790 300L780 170L720 0 M660 120L740 80 M540 30L580 80L660 120 M780 170L940 160L1020 120L980 70 M850 0L980 70 M900 330L940 300L1130 230L1190 170L1446 185 M1110 0L1120 170L1190 480L1220 620L1320 780H1446 M1230 580L1330 570V540 M1190 945L1310 870L1390 840 M1270 900L1330 1090 M1270 900Q1300 940 1446 945 M100 1030L240 930Q290 910 300 950 M300 950L360 1060 M500 800L450 900L370 1090 M530 980L590 950 M90 850L230 930 M1120 230L1160 310 M540 230Q600 170 650 240 M920 1020L930 930",
    rail: "M0 150L110 160L200 190L290 225L620 243Q680 205 740 207L900 240Q960 250 1020 215L1130 140L1250 103L1446 133 M95 0L118 130L130 170 M400 245L740 450L920 492Q1040 500 1060 515L1210 640L1290 740L1330 810Q1380 870 1446 812 M0 510L130 565L310 650L420 680L510 760L630 870L720 1010L840 1188 M125 570L130 690L70 780L75 840L55 920L65 970L160 1090",
    primary: "M0 165L40 185L200 205L280 230L420 237L620 250L720 268L900 330L980 385L1070 425L1130 435L1190 460L1220 463L1320 520L1446 522 M0 525L120 562Q170 535 200 560L260 610L410 665L540 785L640 890L780 1090L960 1188 M0 890L40 970",
    trunk: "M1285 20L1300 110L1315 210L1350 280L1446 390 M1446 910L1390 1000Q1350 1090 1345 1188 M930 1025L950 1060L1010 1070L1160 1188 M950 1060L870 1120L800 1090",
    border: "M1345 0L1330 110L1370 230L1446 310 M1446 580L1390 590L1340 612L1230 615L1160 700L1080 885L1020 870L950 860L915 990L870 980L820 1080 M740 1060L715 1030L620 1110",
    peaks: [[1273,629]],
    refs: [["52",1305,152],["52",1327,243],["45",1430,955]],
  },
];

const at = (s: Sheet, px: number, py: number): Pt => [s.x + px * s.sx, s.y + py * SY];
const place = (s: Sheet) => `translate(${s.x} ${s.y}) scale(${s.sx} ${SY})`;

/* Small gardens and courtyards sprinkled over the built-up sheets. */
function gardens(s: Sheet) {
  let seed = s.x + s.y;
  const next = () => (seed = (seed * 16807) % 2147483647) / 2147483647;
  let d = "";
  for (let i = 0; i < (s.specks ?? 0); i++) {
    const x = Math.round(120 + next() * 1300);
    const y = Math.round(20 + next() * 1160);
    const w = Math.round(8 + next() * 20);
    const h = Math.round(8 + next() * 18);
    d += `M${x} ${y}l${w} ${Math.round(h / 3)}l-${Math.round(w / 3)} ${h}l-${w} -${Math.round(h / 2)}Z`;
  }
  return d;
}

const clusters = [
  { n: 6, x: 890, y: 226 },
  { n: 35, x: 796, y: 286 },
  { n: 33, x: 684, y: 300 },
  { n: 38, x: 868, y: 346 },
  { n: 28, x: 726, y: 420 },
  { n: 14, x: 882, y: 466 },
  { n: 10, x: 656, y: 528 },
  { n: 60, x: 762, y: 530 },
  { n: 25, x: 874, y: 600 },
];

/* Map markers sit on a canvas 1592 by 800 units, centred in the frame. */
const fromCentre = (x: number, y: number) => ({
  left: `calc(50% + ${x - 796}px)`,
  top: `calc(50% + ${y - 400}px)`,
});

const halo = { stroke: "#fff", strokeOpacity: 0.7, strokeWidth: 3, paintOrder: "stroke" as const, strokeLinejoin: "round" as const };

function BaseMap() {
  return (
    <MapCanvas viewBox="93 856 1592 800" preserveAspectRatio="xMidYMid slice" role="img" aria-label="Map of Budapest">
      {sheets.map((s) => (
        <g key={`f${s.x}-${s.y}`} transform={place(s)}>
          {s.fills.map(([fill, d], i) => (
            <React.Fragment key={i}>
              <path d={d} fill={fill} />
              {i === 0 && s.specks && <path d={gardens(s)} fill="#d3efd2" />}
            </React.Fragment>
          ))}
        </g>
      ))}
      <g fill="none" strokeLinejoin="round">
        {sheets.map((s) => (
          <path key={`m${s.x}-${s.y}`} transform={place(s)} d={s.minor} stroke="#bcbcbc" strokeWidth={1.5} />
        ))}
        <g stroke="#7fc081" strokeOpacity={0.75} strokeWidth={5}>
          <path transform={place(sheets[0])} d="M435 18L450 110Q470 150 510 155L610 190L690 175L820 180L850 145L920 155L975 120L955 80L1005 45L970 18" />
          <path transform={place(sheets[2])} d="M1020 20L1012 50L1145 120L1160 20 M1130 270L1190 290L1155 410L1220 530L1215 440L1290 490L1310 460L1345 505L1420 400V320L1330 230L1215 170L1310 130L1370 20 M1130 360L1060 300L1020 320" />
          <path transform={place(sheets[3])} d="M0 305L70 340L130 410L185 500L240 570Q245 620 215 632L150 600H105L70 430" />
        </g>
        <g stroke={C.water} strokeWidth={5}>
          <path transform={place(sheets[4])} d="M810 560L880 560L950 640L965 750L985 850L1000 980L1040 1080L1090 1188" />
          <path transform={place(sheets[1])} d="M675 680V740 M750 735L790 710" />
        </g>
        <g stroke="#b9b7cf" strokeWidth={3}>
          <path transform={place(sheets[5])} d="M595 720L830 960 M590 735L640 840L680 900L820 975L830 960 M615 770L640 760 M665 880L760 855L880 930 M740 860L760 910 M770 870V850 M885 765L1170 1055L1155 1075L1090 1010L880 800L875 785Z M930 830L860 910 M960 820L890 900L910 910L930 880 M940 880L980 930L1030 910 M1080 995L1100 975" />
          <path transform={place(sheets[3])} d="M1085 190L1145 290" />
          <path transform={place(sheets[1])} d="M10 585L105 662" />
        </g>
        {sheets.map((s) => (
          <g key={`r${s.x}-${s.y}`} transform={place(s)}>
            <path d={s.border} stroke="#c58ec6" strokeWidth={4} strokeDasharray="12 6 4 6" />
            <path d={s.primary} stroke="#f6c582" strokeWidth={4} />
            <path d={s.rail} stroke="#858585" strokeWidth={2.5} />
            {s.trunk && <path d={s.trunk} stroke="#f9997d" strokeWidth={6} />}
            {s.motorway && <path d={s.motorway} stroke="#e8718d" strokeWidth={6} />}
          </g>
        ))}
      </g>
      <g fill="#d08f55">
        {sheets.flatMap((s) =>
          s.peaks.map(([px, py]) => {
            const [x, y] = at(s, px, py);
            return <path key={`${x}-${y}`} d={`M${x - 8} ${y + 6}L${x} ${y - 8}L${x + 8} ${y + 6}Z`} />;
          })
        )}
      </g>
      <rect x={1208} y={1233} width={30} height={34} rx={3} fill="#f3e3cc" stroke="#d8ba94" strokeWidth={2} />
      <text x={1223} y={1257} textAnchor="middle" fontFamily="Noto Sans" fontSize={20} fontWeight={600} fill="#7c6a4c">3</text>
      <path fill="#8461c4" d="M1467 1548q2 1 2 5v5l10 7v3l-10-3v6l3 3v2l-5-1-5 1v-2l3-3v-6l-10 3v-3l10-7v-5q0-4 2-5Z" />
      <g fontFamily="Noto Sans, sans-serif" textAnchor="middle" {...halo}>
        <g fontSize={20} fontStyle="italic" fontWeight={600} fill="#b23a45">
          {sheets.flatMap((s) =>
            s.refs.map(([t, px, py]) => {
              const [x, y] = at(s, px, py);
              return <text key={`${t}${x}`} x={x} y={y + 7}>{t}</text>;
            })
          )}
        </g>
        <g fontSize={22} fill="#4a4a4a">
          {sheets.flatMap((s) =>
            (s.towns ?? []).map(([t, px, py]) => {
              const [x, y] = at(s, px, py);
              return <text key={t} x={x} y={y + 7}>{t}</text>;
            })
          )}
        </g>
        <text x={846} y={1298} fontSize={30} fill="#3c3c3c">Budapest</text>
        <g fontSize={20} fontStyle="italic" fill="#4f9556">
          <text x={1546} y={896}>Gödöllői</text>
          <text x={1546} y={920}>Tájvédelmi</text>
          <text x={1546} y={944}>Körzet</text>
        </g>
      </g>
    </MapCanvas>
  );
}

function LocationPin() {
  return (
    <Pin viewBox="0 0 50 82" style={fromCentre(645, 211)} aria-label="Location">
      <defs>
        <linearGradient id="pin" x1="0" y1="0" x2="0" y2="1">
          <stop offset="0" stopColor="#4b9bd6" />
          <stop offset="1" stopColor="#126fc6" />
        </linearGradient>
        <filter id="soft" x="-50%" y="-50%" width="200%" height="200%">
          <feGaussianBlur stdDeviation="5" />
        </filter>
      </defs>
      <path d="M25 80L38 42Q54 28 66 38Q72 52 50 66Z" fill="#000" opacity={0.35} filter="url(#soft)" />
      <path d="M25 81C22 69 16 58 9 46Q1 35 1 25A24 24 0 0 1 49 25Q49 35 41 46C34 58 28 69 25 81Z" fill="url(#pin)" stroke="#2e6c97" strokeWidth={2} />
      <path d="M25 72C21 62 16 53 11 44Q3 34 3 25A22 22 0 0 1 47 25Q47 34 39 44C34 53 29 62 25 72Z" fill="none" stroke="#fff" strokeOpacity={0.15} strokeWidth={2} />
      <circle cx={25} cy={25} r={9} fill="#fff" stroke="#2e6c97" strokeWidth={2} />
    </Pin>
  );
}

/* ---------- content ---------- */

const fieldRows = [
  "RoofCoverAttachment, RoofAttachedStructures, GlassType, LatticeType, FloodZone, SoftStory, Basement,",
  "BasementLevelCount, WindowProtection, FoundationType, WallAttachedStructure, AppurtenantStructure,",
  "ConstructionQuality, GroundEquipment, EquipmentBracing, Flashing, BuildingShape, ShapeIrregularity,",
  "Pounding, Ornamentation, SpecialEQConstruction, Retrofit, CrippleWall, FoundationConnection, ShortColumn,",
  "Fatigue, Cladding, BIPreparedness, BIRedundancy, FirstFloorHeight, FirstFloorHeightUnit, Datum,",
  "GroundElevation, GroundElevationUnit, Tank, Redundancy, InternalPartition, ExternalDoors, Torsion,",
  "MechanicalEquipmentSide, ContentsWindVuln, ContentsFloodVuln, ContentsQuakeVuln, SmallDebris,",
  "FloorsOccupied, FloodDefenseHeight, FloodDefenseHeightUnit, FloodDebrisResilience, BaseFloodElevation,",
  "BaseFloodElevationUnit, BuildingHeight, BuildingHeightUnit, BuildingValuation, TreeExposure, Chimney,",
  "BuildingType, Packaging, Protection, SalvageProtection, ValuablesStorage, DaysHeld, BrickVeneer,",
  "FEMACompliance, CustomFloodSOP, CustomFloodZone, MultiStoryHall, BuildingExteriorOpening,",
  "ServiceEquipmentProtection, TallOneStory, TerrainRoughness, NumberOfEmployees, Payroll, PortNumber",
];

export default function App() {
  return (
    <Modal>
      <GlobalStyle />
      <Details>
        <Fields>
          {fieldRows.map((row) => (
            <React.Fragment key={row}>{row}<br /></React.Fragment>
          ))}
        </Fields>
      </Details>
      <Section>
        <Toolbar>
          <Button type="button" $tone="red" $icon={21}><FaFile />Content</Button>
          <Button type="button" $tone="red" $icon={32}><FaMap />Map</Button>
          <Button type="button"><FaDownload />Export</Button>
        </Toolbar>
        <Card>
          <CardHeader>
            <CardTitle>Map</CardTitle>
            <Button type="button" $icon={19} aria-label="Close map"><FaTimes /></Button>
          </CardHeader>
          <CardBody>
            <MapFrame>
              <BaseMap />
              <Markers>
                {clusters.map((c) => (
                  <Cluster key={c.n} type="button" style={fromCentre(c.x, c.y)}>{c.n}</Cluster>
                ))}
                <LocationPin />
              </Markers>
              <ZoomControl>
                <ZoomButton type="button" aria-label="Zoom in">
                  <svg width="24" height="24"><path d="M12 0V24M0 12H24" stroke="currentColor" strokeWidth="5" /></svg>
                </ZoomButton>
                <ZoomButton type="button" aria-label="Zoom out">
                  <svg width="24" height="24"><path d="M0 12H24" stroke="currentColor" strokeWidth="5" /></svg>
                </ZoomButton>
              </ZoomControl>
              <Attribution>
                <a href="#leaflet">Leaflet</a> | © <a href="#osm">OpenStreetMap</a> contributors, <a href="#license">CC-BY-SA</a>
              </Attribution>
            </MapFrame>
          </CardBody>
        </Card>
      </Section>
      <Footer>
        <Button type="button">Dismiss</Button>
      </Footer>
    </Modal>
  );
}
